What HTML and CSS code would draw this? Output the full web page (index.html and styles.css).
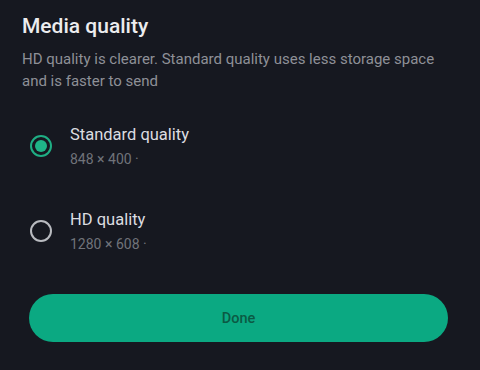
FILE: index.html
```html
<!DOCTYPE html>
<html>
<head>
<meta charset="utf-8">
<link rel="stylesheet" href="styles.css">
</head>
<body>
<div class="sheet">
  <h1 class="title">Media quality</h1>
  <p class="desc">HD quality is clearer. Standard quality uses less storage space and is faster to send</p>
  <div class="options">
    <div class="option">
      <span class="radio checked"><span class="dot"></span></span>
      <div class="labels">
        <div class="name">Standard quality</div>
        <div class="size">848 × 400 ·</div>
      </div>
    </div>
    <div class="option">
      <span class="radio"></span>
      <div class="labels">
        <div class="name">HD quality</div>
        <div class="size">1280 × 608 ·</div>
      </div>
    </div>
  </div>
  <button class="done">Done</button>
</div>
</body>
</html>
```
FILE: styles.css
```css
html, body {
  margin: 0;
  padding: 0;
  background: #161820;
  width: 480px;
  height: 370px;
  overflow: hidden;
}
.sheet {
  font-family: Roboto, "Liberation Sans", sans-serif;
  padding: 13px 0 0 22px;
  display: flex;
  flex-direction: column;
}
.title {
  margin: 0;
  font-size: 21px;
  line-height: 26px;
  font-weight: 500;
  color: #ececee;
}
.desc {
  margin: 9px 0 0 0;
  width: 432px;
  font-size: 15px;
  line-height: 22px;
  color: #8e9097;
}
.options {
  margin-top: 32px;
  display: flex;
  flex-direction: column;
  gap: 41px;
}
.option {
  display: flex;
  align-items: center;
  gap: 18px;
  padding-left: 8px;
}
.radio {
  width: 22px;
  height: 22px;
  box-sizing: border-box;
  border: 2px solid #b9bbc0;
  border-radius: 50%;
  display: flex;
  align-items: center;
  justify-content: center;
  flex: none;
}
.radio.checked {
  border-color: #1fae84;
}
.dot {
  width: 12px;
  height: 12px;
  border-radius: 50%;
  background: #1fb487;
}
.labels {
  display: flex;
  flex-direction: column;
  gap: 5px;
}
.name {
  font-size: 16.5px;
  line-height: 21px;
  color: #dcdde0;
}
.size {
  font-size: 14px;
  line-height: 18px;
  color: #70737a;
}
.done {
  margin: 41px 0 0 7px;
  width: 419px;
  height: 48px;
  border: none;
  border-radius: 24px;
  background: #0ba982;
  color: #0b5a44;
  font-family: Roboto, "Liberation Sans", sans-serif;
  font-size: 14.5px;
  font-weight: 500;
  padding: 0;
}
```
